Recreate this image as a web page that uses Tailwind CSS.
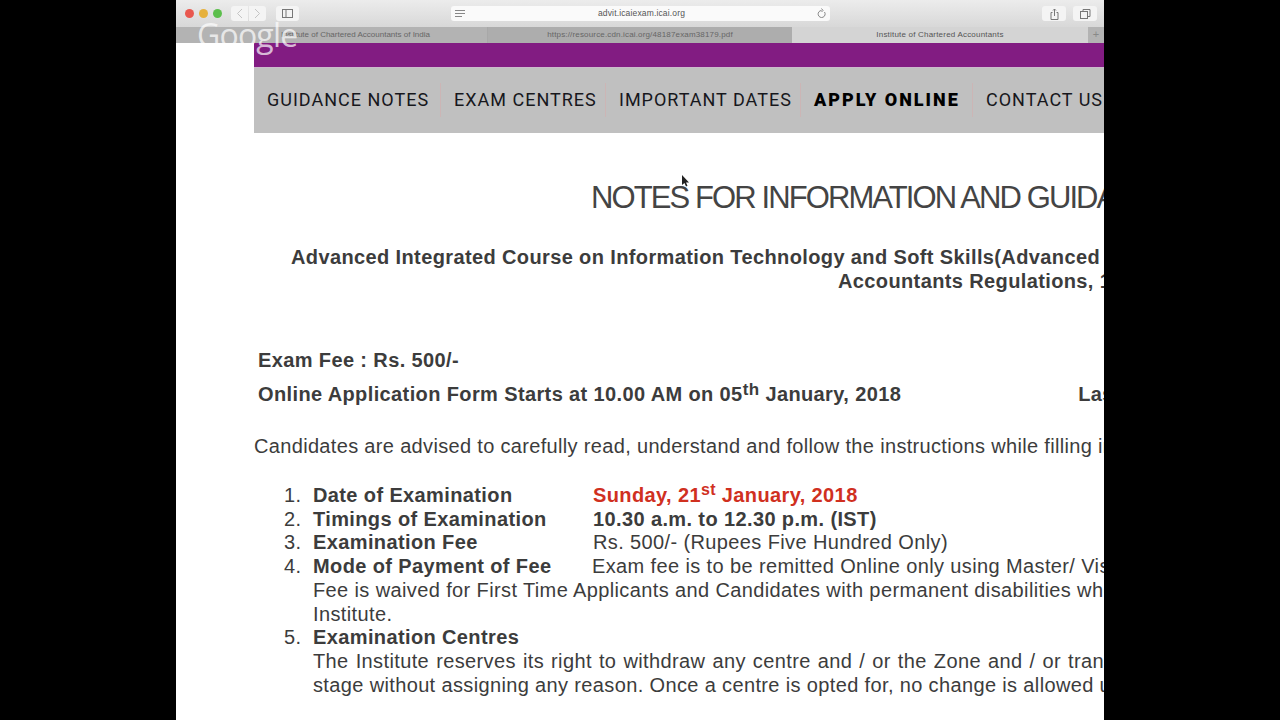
<!DOCTYPE html>
<html lang="en">
<head>
  <meta charset="UTF-8" />
  <title>Institute of Chartered Accountants</title>
  <script src="https://cdn.jsdelivr.net/npm/@tailwindcss/browser@4"></script>
</head>
<body class="bg-black font-['Liberation_Sans',sans-serif]">
  <div class="w-[928px] h-[720px] ml-[176px] bg-white overflow-hidden relative flex flex-col">
    <!-- safari toolbar -->
    <div class="h-[27px] shrink-0 bg-gradient-to-b from-[#ececec] to-[#d8d8d8] flex items-center pl-[9px] pr-[7px]">
      <div class="flex gap-[5px] w-[46px] shrink-0">
        <div class="w-[9px] h-[9px] rounded-full bg-[#e9584f]"></div>
        <div class="w-[9px] h-[9px] rounded-full bg-[#e6b13c]"></div>
        <div class="w-[9px] h-[9px] rounded-full bg-[#5cbf4c]"></div>
      </div>
      <div class="flex gap-px">
        <div class="w-[17px] h-[15px] rounded-l-[3px] bg-[#f4f4f4] flex items-center justify-center">
          <svg width="7" height="11" viewBox="0 0 7 11" fill="none" stroke="#c4c4c4" stroke-width="1"><path d="M6 1 1.500 5.500 6 10"/></svg>
        </div>
        <div class="w-[17px] h-[15px] rounded-r-[3px] bg-[#f4f4f4] flex items-center justify-center">
          <svg width="7" height="11" viewBox="0 0 7 11" fill="none" stroke="#c4c4c4" stroke-width="1"><path d="M1 1 5.500 5.500 1 10"/></svg>
        </div>
      </div>
      <div class="w-[23px] h-[15px] ml-[10px] rounded-[3px] bg-[#f4f4f4] flex items-center justify-center">
        <svg width="11" height="9" viewBox="0 0 11 9" fill="none" stroke="#777" stroke-width="1"><rect x=".5" y=".5" width="10" height="8"/><path d="M4 .5v8"/></svg>
      </div>
      <div class="w-[379px] h-[15px] ml-[152px] rounded-[3px] bg-[#fafafa] flex items-center pl-[4px] pr-[4px]">
        <svg width="11" height="7" viewBox="0 0 11 7" fill="none" stroke="#888" stroke-width="1"><path d="M0 .5h10M0 3.500h10M0 6.500h7"/></svg>
        <span class="flex-1 text-center text-[8.500px] text-[#555] tracking-[.15px]">advit.icaiexam.icai.org</span>
        <svg width="9" height="11" viewBox="0 0 9 11" fill="none" stroke="#888" stroke-width="1"><path d="M7.500 4A3.500 3.500 0 1 1 4.500 2.500M4.500 .5l1.500 2-1.500 1.500"/></svg>
      </div>
      <div class="ml-auto flex gap-[7px]">
        <div class="w-[24px] h-[15px] rounded-[3px] bg-[#f4f4f4] flex items-center justify-center">
          <svg width="9" height="12" viewBox="0 0 9 12" fill="none" stroke="#777" stroke-width="1"><path d="M2.500 4.500H1v7h7v-7H6.500M4.500 8V1M3 2.500 4.500 1 6 2.500"/></svg>
        </div>
        <div class="w-[24px] h-[15px] rounded-[3px] bg-[#f4f4f4] flex items-center justify-center">
          <svg width="11" height="10" viewBox="0 0 11 10" fill="none" stroke="#777" stroke-width="1"><rect x=".5" y="2.500" width="7" height="7"/><path d="M3 2.500V.5h7v7H7.500"/></svg>
        </div>
      </div>
    </div>

    <!-- tab bar -->
    <div class="h-[16px] shrink-0 flex text-[8px] text-[#666] leading-[15px] bg-[#b3b3b3]">
      <div class="w-[312px] pl-[105px] whitespace-nowrap border-r border-[#a8a8a8]">Institute of Chartered Accountants of India</div>
      <div class="w-[304px] text-center bg-[#adadad] tracking-[.16px]">https://resource.cdn.icai.org/48187exam38179.pdf</div>
      <div class="w-[296px] text-center bg-[#d4d4d4] text-[#555] tracking-[.2px]">Institute of Chartered Accountants</div>
      <div class="w-[16px] text-center text-[11px] text-[#888]">+</div>
    </div>

    <!-- page -->
    <div class="pl-[78px] flex-1 overflow-hidden">
      <div class="h-[24px] bg-[#821c82]"></div>
      <nav class="h-[66px] bg-[#c0c0c0] border-t border-[#cdb9cd] flex items-center pl-[13px] pb-[2px] text-[18px] tracking-[1px] text-[#17171c] whitespace-nowrap font-['Roboto',sans-serif]">
        <span class="w-[173px]">GUIDANCE NOTES</span>
        <span class="w-px h-[34px] bg-[#ccb5b5] mr-[13px]"></span>
        <span class="w-[151px]">EXAM CENTRES</span>
        <span class="w-px h-[34px] bg-[#ccb5b5] mr-[13px]"></span>
        <span class="w-[181px]">IMPORTANT DATES</span>
        <span class="w-px h-[34px] bg-[#ccb5b5] mr-[13px]"></span>
        <span class="w-[158px] font-black text-black tracking-[2px]">APPLY ONLINE</span>
        <span class="w-px h-[34px] bg-[#ccb5b5] mr-[13px]"></span>
        <span>CONTACT US</span>
      </nav>

      <div class="text-[#3c3c3c] whitespace-nowrap tracking-[.38px]">
        <h1 class="mt-[45px] ml-[337px] text-[31px] leading-[40px] tracking-[-1.900px] text-[#444]">NOTES FOR INFORMATION AND GUIDANCE</h1>
        <p class="mt-[27px] ml-[37px] text-[20px] leading-[24px] font-bold">Advanced Integrated Course on Information Technology and Soft Skills(Advanced ICITSS)</p>
        <p class="ml-[584px] text-[20px] leading-[24px] font-bold">Accountants Regulations, 1988</p>

        <p class="mt-[55px] ml-[4px] text-[20px] leading-[24px] font-bold">Exam Fee : Rs. 500/-</p>
        <p class="mt-[10px] ml-[4px] text-[20px] leading-[24px] font-bold flex items-baseline">
          <span>Online Application Form Starts at 10.00 AM on 05<sup class="text-[17px] top-[-.38em]">th</sup> January, 2018</span>
          <span class="ml-[177px]">Last Date</span>
        </p>
        <p class="mt-[28px] text-[20px] leading-[24px] tracking-[.33px]">Candidates are advised to carefully read, understand and follow the instructions while filling in the form</p>

        <ol class="mt-[26px] text-[20px] leading-[23.700px]">
          <li class="flex">
            <span class="w-[59px] pl-[30px]">1.</span>
            <span class="w-[280px] font-bold">Date of Examination</span>
            <span class="font-bold text-[#d0301f]">Sunday, 21<sup class="text-[16px] top-[-.42em]">st</sup> January, 2018</span>
          </li>
          <li class="flex">
            <span class="w-[59px] pl-[30px]">2.</span>
            <span class="w-[280px] font-bold">Timings of Examination</span>
            <span class="font-bold">10.30 a.m. to 12.30 p.m. (IST)</span>
          </li>
          <li class="flex">
            <span class="w-[59px] pl-[30px]">3.</span>
            <span class="w-[280px] font-bold">Examination Fee</span>
            <span>Rs. 500/- (Rupees Five Hundred Only)</span>
          </li>
          <li class="flex">
            <span class="w-[59px] pl-[30px] shrink-0">4.</span>
            <div>
              <p><span class="inline-block w-[279px] font-bold">Mode of Payment of Fee</span>Exam fee is to be remitted Online only using Master/ Visa</p>
              <p>Fee is waived for First Time Applicants and Candidates with permanent disabilities where</p>
              <p>Institute.</p>
            </div>
          </li>
          <li class="flex">
            <span class="w-[59px] pl-[30px] shrink-0">5.</span>
            <div>
              <p class="font-bold">Examination Centres</p>
              <p class="[word-spacing:1.100px]">The Institute reserves its right to withdraw any centre and / or the Zone and / or transfer</p>
              <p class="tracking-[.36px]">stage without assigning any reason. Once a centre is opted for, no change is allowed under</p>
            </div>
          </li>
        </ol>
      </div>
    </div>

    <!-- watermark -->
    <div class="absolute left-[21px] top-[15px] text-[32px] leading-[40px] tracking-[-.8px] text-white/70 font-['Open_Sans',sans-serif]">Google</div>
    <!-- cursor -->
    <svg class="absolute left-[505px] top-[175px]" width="8" height="12" viewBox="0 0 8 12" fill="#222"><path d="M1 0v10l2.500-2 1.500 3.500 1.500-.7L5 7.500h3z"/></svg>
  </div>
</body>
</html>
